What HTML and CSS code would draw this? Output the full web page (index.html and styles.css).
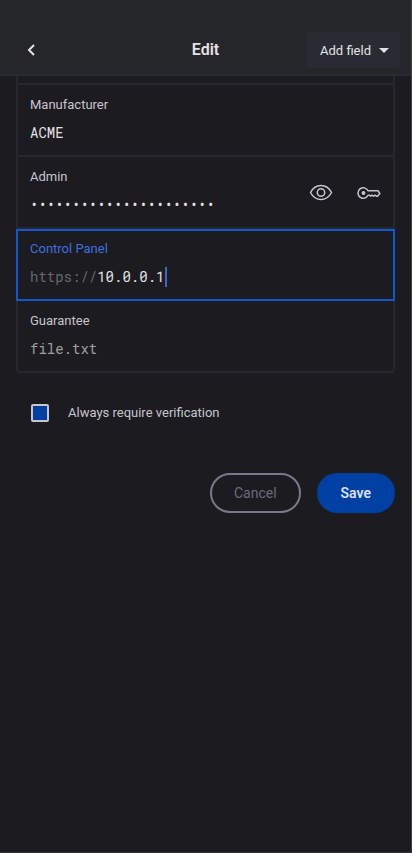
FILE: index.html
```html
<!DOCTYPE html>
<html lang="en">
<head>
<meta charset="utf-8">
<meta name="viewport" content="width=device-width, initial-scale=1">
<title>Edit</title>
<link rel="stylesheet" href="styles.css">
</head>
<body>
<header class="bar">
  <button class="back" type="button" aria-label="Back">
    <svg width="8" height="12" viewBox="0 0 8 12" fill="none" stroke="currentColor" stroke-width="2"><path d="M7 1 2 6l5 5"/></svg>
  </button>
  <h1 class="title">Edit</h1>
  <button class="add" type="button">Add field
    <svg width="10" height="5" viewBox="0 0 10 5" fill="currentColor"><path d="M0 0h10L5 5z"/></svg>
  </button>
</header>
<form class="form">
  <div class="fields">
    <div class="peek"></div>
    <div class="field">
      <div class="entry">
        <label class="label" for="maker">Manufacturer</label>
        <input class="value" id="maker" type="text" value="ACME">
      </div>
    </div>
    <div class="field">
      <div class="entry">
        <label class="label" for="admin">Admin</label>
        <input class="value" id="admin" type="password" value="0123456789012345678901">
      </div>
      <div class="tools">
        <button class="tool" type="button" aria-label="Show value">
          <svg width="24" height="24" viewBox="0 0 24 24" fill="none" stroke="currentColor" stroke-width="1.5"><path d="M1.500 12.500C4 7.700 7.600 5.500 12 5.500s8 2.200 10.500 7C20 17.300 16.400 19.500 12 19.500S4 17.300 1.500 12.500z"/><circle cx="12" cy="12.500" r="3.700"/></svg>
        </button>
        <button class="tool" type="button" aria-label="Generate value">
          <svg width="24" height="24" viewBox="0 0 24 24" fill="none" stroke="currentColor" stroke-width="1.500" stroke-linejoin="round"><path d="M11 10.800A5.250 5.250 0 1 0 11 15.200H12.500l1.300 1 1.300-1 1.500 1 1.500-1 1.300 1H20.500l2.300-2.700L21.200 10.800z"/><circle cx="6.500" cy="13" r="1.200" fill="currentColor"/></svg>
        </button>
      </div>
    </div>
    <div class="field active">
      <div class="entry">
        <label class="label" for="panel">Control Panel</label>
        <div class="address">
          <span class="prefix">https://</span><input class="value host" id="panel" type="text" value="10.0.0.1"><span class="caret"></span>
        </div>
      </div>
    </div>
    <div class="field">
      <div class="entry">
        <label class="label" for="guarantee">Guarantee</label>
        <input class="value muted" id="guarantee" type="text" value="file.txt">
      </div>
    </div>
  </div>
  <label class="verify"><input class="check" type="checkbox">Always require verification</label>
  <div class="actions">
    <button class="action cancel" type="button">Cancel</button>
    <button class="action save" type="submit">Save</button>
  </div>
</form>
</body>
</html>
```
FILE: styles.css
```css
* {
  box-sizing: border-box;
}

body {
  margin: 0;
  min-height: 100vh;
  border-right: 1px solid #414246;
  border-bottom: 1px solid #323136;
  background: #1c1b1f;
  color: #c6c5d0;
  font-family: Roboto, "Liberation Sans", sans-serif;
  font-size: 13px;
}

button,
input {
  margin: 0;
  padding: 0;
  border: 0;
  background: none;
  color: inherit;
  font: inherit;
}

svg {
  display: block;
}

.bar {
  display: grid;
  grid-template-columns: 1fr auto 1fr;
  align-items: center;
  padding: 32px 11px 6px;
  border-bottom: 2px solid #282b31;
  background: #25262a;
  color: #e5e1e6;
}

.back {
  display: flex;
  align-items: center;
  justify-content: center;
  width: 40px;
  height: 36px;
}

.title {
  margin: 0;
  padding-bottom: 2px;
  font-size: 16px;
  font-weight: 600;
}

.add {
  display: flex;
  align-items: center;
  justify-self: end;
  gap: 8px;
  height: 36px;
  padding: 0 11px 0 14px;
  border-radius: 4px;
  background: #282b31;
}

.form {
  padding: 0 16px;
}

.fields {
  border: 2px solid #25282d;
  border-top: 0;
  border-radius: 0 0 4px 4px;
}

.peek {
  height: 9px;
  border-bottom: 2px solid #25282d;
}

.field {
  display: flex;
  align-items: flex-start;
  justify-content: space-between;
  height: 72px;
  padding: 10px 12px 0;
  border-bottom: 2px solid #25282d;
}

.field:last-child {
  height: 70px;
  border-bottom: 0;
}

.entry {
  display: flex;
  flex-direction: column;
  gap: 8px;
}

.label {
  line-height: 20px;
}

.value,
.prefix {
  height: 20px;
  font-family: "Roboto Mono", "DejaVu Sans Mono", "Liberation Mono", monospace;
  font-size: 14px;
  line-height: 20px;
}

.value {
  width: 24ch;
  color: #e5e1e6;
  outline: 0;
}

.muted {
  color: #a09f9f;
}

.tools {
  display: flex;
  align-self: center;
  gap: 24px;
  padding-bottom: 10px;
}

.active {
  margin: 0 -2px;
  padding-top: 8px;
  border: 2px solid #1258cc;
}

.active .label {
  color: #3b70df;
}

.address {
  display: flex;
}

.prefix {
  color: #68676b;
}

.host {
  width: 8ch;
}

.caret {
  width: 2px;
  height: 20px;
  margin-left: 1px;
  background: #3b66c8;
}

.verify {
  display: flex;
  align-items: center;
  gap: 19px;
  margin-top: 30px;
  padding-left: 15px;
  line-height: 20px;
}

.check {
  appearance: none;
  width: 18px;
  height: 18px;
  border: 2px solid #c6c5d0;
  border-radius: 2px;
  background: #0040a2;
}

.actions {
  display: flex;
  justify-content: flex-end;
  gap: 16px;
  margin-top: 50px;
}

.action {
  height: 40px;
  padding: 0 24px;
  border-radius: 20px;
  font-size: 14px;
}

.cancel {
  padding: 0 22px;
  border: 2px solid #777a8d;
  color: #696b7e;
}

.save {
  background: #0040a2;
  color: #dce2ff;
  font-weight: 600;
}
```
